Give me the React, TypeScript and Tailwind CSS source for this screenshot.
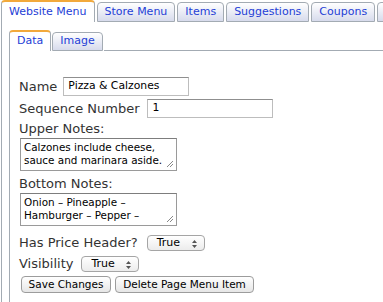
import React from "react"

const outerTabs = ["Website Menu", "Store Menu", "Items", "Suggestions", "Coupons", "Add-ons"]
const innerTabs = ["Data", "Image"]

function Tab({ label, active, small }: { label: string; active?: boolean; small?: boolean }) {
  if (active) {
    return (
      <div
        className={`flex shrink-0 items-center rounded-t-[4px] border border-b-0 border-[#a3abb3] border-t-2 border-t-[#f2a93b] bg-white px-[7px] text-[#2440d6] ${
          small ? "h-[21px]" : "h-[22px]"
        }`}
      >
        {label}
      </div>
    )
  }
  return (
    <div
      className={`flex shrink-0 items-center rounded-t-[4px] border border-[#a3abb3] bg-gradient-to-b from-white to-[#d7dbec] px-[7px] text-[#2440d6] ${
        small ? "h-[19px]" : "h-[20px]"
      }`}
    >
      {label}
    </div>
  )
}

function Grip() {
  return (
    <svg className="absolute bottom-[2px] right-[2px]" width="8" height="8" viewBox="0 0 8 8">
      <path d="M7 1 L1 7 M7 4 L4 7" stroke="#888" strokeWidth="1" />
    </svg>
  )
}

function TextBox({ lines }: { lines: string[] }) {
  return (
    <div className="relative ml-[1px] h-[33px] w-[157px] border border-[#9a9a9a] border-t-[#7d7d7d] bg-white px-[3px] pt-[2px] text-[10.4px] leading-[13px] text-black">
      {lines.map((l) => (
        <div key={l} className="whitespace-nowrap">
          {l}
        </div>
      ))}
      <Grip />
    </div>
  )
}

function Select({ value, width }: { value: string; width: string }) {
  return (
    <div
      className={`relative flex h-[16px] items-center rounded-[4px] border border-[#a5a5a5] bg-gradient-to-b from-white to-[#ececec] pl-[9px] text-[11px] text-black ${width}`}
    >
      {value}
      <svg className="absolute right-[7px] top-[4px]" width="5" height="8" viewBox="0 0 5 8">
        <path d="M2.5 0 L5 3 L0 3 Z M0 5 L5 5 L2.5 8 Z" fill="#555" />
      </svg>
    </div>
  )
}

function Button({ label, width }: { label: string; width: string }) {
  return (
    <div
      className={`flex h-[17px] items-center justify-center rounded-[4px] border border-[#9c9c9c] bg-gradient-to-b from-white to-[#e6e6e6] text-[10.5px] text-black ${width}`}
    >
      {label}
    </div>
  )
}

export default function App() {
  return (
    <div className="h-[302px] w-[383px] overflow-hidden bg-white font-['DejaVu_Sans',sans-serif]">
      {/* Top tabs */}
      <div className="flex h-[22px] items-end gap-[2px] pl-[1px] text-[11px]">
        {outerTabs.map((t, i) => (
          <Tab key={t} label={t} active={i === 0} />
        ))}
      </div>

      {/* Outer panel */}
      <div className="ml-[1px] h-[280px] border-l border-[#a3abb3] pl-[7px] pt-[8px]">
        <div className="flex h-[21px] items-end gap-[1px] text-[11px]">
          {innerTabs.map((t, i) => (
            <Tab key={t} label={t} active={i === 0} small />
          ))}
          <div className="h-full flex-1 border-b border-[#a3abb3]" />
        </div>

        {/* Inner panel */}
        <div className="h-[260px] border-l border-[#a3abb3] pl-[9px] pt-[26px] text-[13px] text-[#333]">
          <div className="flex h-[19px] items-center">
            <span>Name</span>
            <div className="ml-[6px] flex h-[19px] w-[126px] items-center border border-[#bdbdbd] border-t-[#8f8f8f] pl-[4px] text-[10.8px] text-black">
              Pizza &amp; Calzones
            </div>
          </div>
          <div className="mt-[3px] flex h-[19px] items-center">
            <span>Sequence Number</span>
            <div className="ml-[8px] flex h-[19px] w-[126px] items-center border border-[#bdbdbd] border-t-[#8f8f8f] pl-[4px] text-[10.8px] text-black">
              1
            </div>
          </div>
          <div className="mt-[2px] h-[18px] leading-[18px]">Upper Notes:</div>
          <TextBox lines={["Calzones include cheese,", "sauce and marinara aside."]} />
          <div className="mt-[4px] h-[18px] leading-[18px]">Bottom Notes:</div>
          <TextBox lines={["Onion – Pineapple –", "Hamburger – Pepper –"]} />
          <div className="mt-[9px] flex h-[16px] items-center">
            <span>Has Price Header?</span>
            <div className="ml-[9px]">
              <Select value="True" width="w-[58px]" />
            </div>
          </div>
          <div className="mt-[5px] flex h-[16px] items-center">
            <span>Visibility</span>
            <div className="ml-[8px]">
              <Select value="True" width="w-[58px]" />
            </div>
          </div>
          <div className="ml-[2px] mt-[4px] flex gap-[4px]">
            <Button label="Save Changes" width="w-[90px]" />
            <Button label="Delete Page Menu Item" width="w-[139px]" />
          </div>
        </div>
      </div>
    </div>
  )
}
